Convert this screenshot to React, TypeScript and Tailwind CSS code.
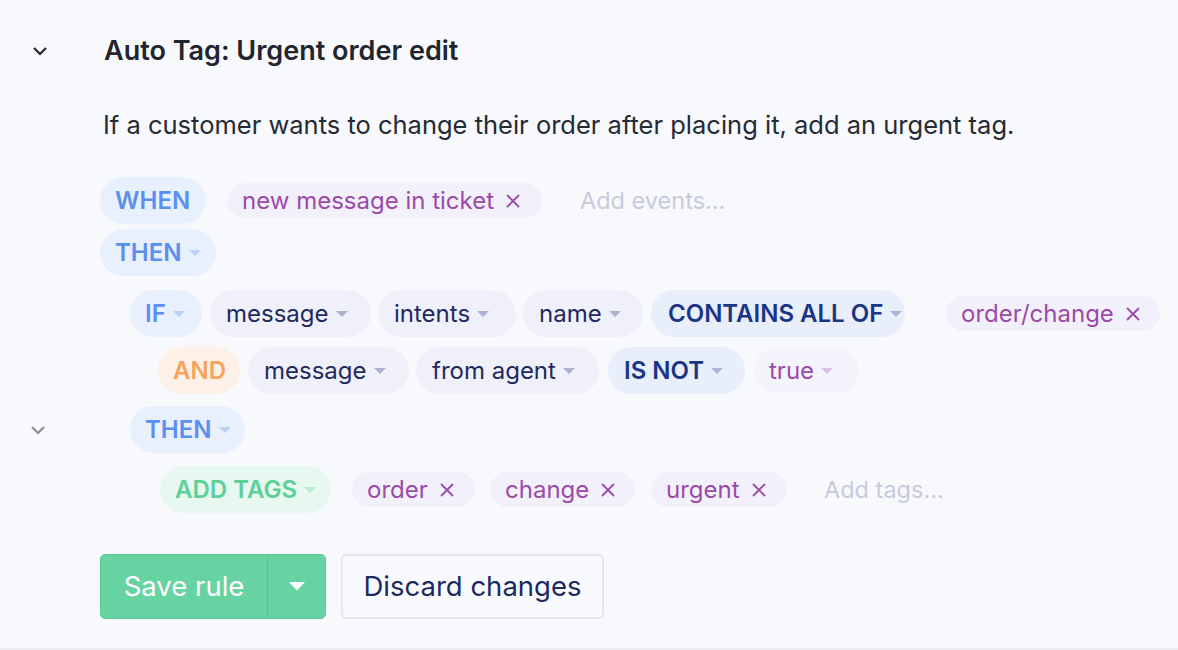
import React from "react";

const Caret = ({ color }: { color: string }) => (
  <svg width="12" height="7" viewBox="0 0 12 7" className="ml-[7px] mt-[1px] shrink-0">
    <path d="M0 0 L12 0 L6 6 Z" fill={color} />
  </svg>
);

const X = ({ color }: { color: string }) => (
  <svg width="14" height="14" viewBox="0 0 14 14" className="ml-[12px] shrink-0">
    <path d="M1.5 1.5 L12.5 12.5 M12.5 1.5 L1.5 12.5" stroke={color} strokeWidth="1.8" strokeLinecap="round" />
  </svg>
);

const Chevron = ({ color }: { color: string }) => (
  <svg width="16" height="10" viewBox="0 0 16 10">
    <path d="M2 2 L8 8 L14 2" stroke={color} strokeWidth="2.2" fill="none" />
  </svg>
);

const Keyword = ({
  label,
  text,
  bg,
  caret,
  w,
}: {
  label: string;
  text: string;
  bg: string;
  caret?: string;
  w: string;
}) => (
  <div className={`flex h-[47px] items-center rounded-full pl-[15px] ${bg} ${w}`}>
    <span className={`text-[24px] font-semibold ${text}`}>{label}</span>
    {caret && <Caret color={caret} />}
  </div>
);

const Field = ({ label, w }: { label: string; w: string }) => (
  <div className={`flex h-[47px] items-center rounded-full bg-[#eff0f9] pl-[16px] ${w}`}>
    <span className="text-[24px] text-[#1e2a5e]">{label}</span>
    <Caret color="#aeb1cb" />
  </div>
);

const Tag = ({ label, w }: { label: string; w: string }) => (
  <div className={`flex h-[35px] items-center rounded-full bg-[#f2f1fb] pl-[15px] ${w}`}>
    <span className="text-[24px] text-[#9b4aa8]">{label}</span>
    <X color="#9b4aa8" />
  </div>
);

const Gutter = ({ children }: { children?: React.ReactNode }) => (
  <div className="flex w-[100px] shrink-0 items-center pl-[30px]">{children}</div>
);

export default function App() {
  return (
    <div
      className="h-[650px] w-[1178px] overflow-hidden border-b-2 border-[#eceef2] bg-[#f8f9fd]"
      style={{ fontFamily: "Inter, 'Noto Sans', sans-serif" }}
    >
      {/* Title */}
      <div className="flex h-[100px] items-center pt-[2px]">
        <Gutter>
          <div className="pl-[2px]">
            <Chevron color="#22252d" />
          </div>
        </Gutter>
        <h1 className="pl-[4px] text-[27px] font-semibold text-[#22252d]">Auto Tag: Urgent order edit</h1>
      </div>

      {/* Description */}
      <div className="flex h-[50px] items-center">
        <Gutter />
        <p className="pl-[3px] text-[25.5px] text-[#262a33]">
          If a customer wants to change their order after placing it, add an urgent tag.
        </p>
      </div>

      {/* WHEN row */}
      <div className="mt-[27px] flex items-center">
        <Gutter />
        <Keyword label="WHEN" text="text-[#5b8ff0]" bg="bg-[#e9f0fd]" w="w-[106px]" />
        <div className="ml-[21px]">
          <Tag label="new message in ticket" w="w-[315px]" />
        </div>
        <span className="ml-[38px] text-[23.5px] text-[#c8cadc]">Add events...</span>
      </div>

      {/* THEN row */}
      <div className="mt-[5px] flex items-center">
        <Gutter />
        <Keyword label="THEN" text="text-[#5b8ff0]" bg="bg-[#e9f0fd]" caret="#bccff7" w="w-[116px]" />
      </div>

      {/* IF row */}
      <div className="mt-[14px] flex items-center">
        <Gutter />
        <div className="flex items-center gap-[7px] pl-[30px]">
          <Keyword label="IF" text="text-[#5b8ff0]" bg="bg-[#e9f0fd]" caret="#bccff7" w="w-[72px]" />
          <div className="ml-[1px]">
            <Field label="message" w="w-[161px]" />
          </div>
          <Field label="intents" w="w-[138px]" />
          <Field label="name" w="w-[120px]" />
          <div className="ml-[1px] flex h-[47px] w-[254px] items-center rounded-full bg-[#e8eefa] pl-[17px]">
            <span className="text-[24px] font-semibold text-[#1b3586]">CONTAINS ALL OF</span>
            <Caret color="#a9b6d6" />
          </div>
          <div className="ml-[34px]">
            <Tag label="order/change" w="w-[214px]" />
          </div>
        </div>
      </div>

      {/* AND row */}
      <div className="mt-[10px] flex items-center">
        <Gutter />
        <div className="flex items-center gap-[7px] pl-[58px]">
          <Keyword label="AND" text="text-[#f5a35f]" bg="bg-[#fdf1e7]" w="w-[82px]" />
          <div className="ml-[1px]">
            <Field label="message" w="w-[161px]" />
          </div>
          <Field label="from agent" w="w-[183px]" />
          <div className="ml-[2px] flex h-[47px] w-[137px] items-center rounded-full bg-[#e8eefa] pl-[16px]">
            <span className="text-[24px] font-semibold text-[#1b3586]">IS NOT</span>
            <Caret color="#a9b6d6" />
          </div>
          <div className="ml-[2px] flex h-[45px] w-[105px] items-center rounded-full bg-[#f3f3fc] pl-[15px]">
            <span className="text-[24px] text-[#9b4aa8]">true</span>
            <Caret color="#dcc0e3" />
          </div>
        </div>
      </div>

      {/* nested THEN row */}
      <div className="mt-[12px] flex items-center">
        <Gutter>
          <Chevron color="#8a8d95" />
        </Gutter>
        <div className="pl-[30px]">
          <Keyword label="THEN" text="text-[#5b8ff0]" bg="bg-[#e9f0fd]" caret="#bccff7" w="w-[115px]" />
        </div>
      </div>

      {/* ADD TAGS row */}
      <div className="mt-[13px] flex items-center">
        <Gutter />
        <div className="flex items-center pl-[60px]">
          <Keyword label="ADD TAGS" text="text-[#5dcf99]" bg="bg-[#e6f8ef]" caret="#b8ebd2" w="w-[171px]" />
          <div className="ml-[21px]">
            <Tag label="order" w="w-[123px]" />
          </div>
          <div className="ml-[15px]">
            <Tag label="change" w="w-[145px]" />
          </div>
          <div className="ml-[16px]">
            <Tag label="urgent" w="w-[136px]" />
          </div>
          <span className="ml-[37px] text-[23.5px] text-[#c8cadc]">Add tags...</span>
        </div>
      </div>

      {/* Buttons */}
      <div className="mt-[41px] flex items-center">
        <Gutter />
        <div className="flex h-[65px] w-[226px] overflow-hidden rounded-[5px] border border-[#5fc897] bg-[#68d3a2]">
          <div className="flex w-[167px] items-center justify-center border-r border-[#5bc392]">
            <span className="text-[27.5px] text-white">Save rule</span>
          </div>
          <div className="flex flex-1 items-center justify-center">
            <svg width="16" height="9" viewBox="0 0 16 9">
              <path d="M0 0 L16 0 L8 8.5 Z" fill="#ffffff" />
            </svg>
          </div>
        </div>
        <div className="ml-[15px] flex h-[65px] w-[263px] items-center justify-center rounded-[5px] border-2 border-[#e6e8ee] bg-[#f9fafd]">
          <span className="text-[27.5px] text-[#1c2a5e]">Discard changes</span>
        </div>
      </div>
    </div>
  );
}
